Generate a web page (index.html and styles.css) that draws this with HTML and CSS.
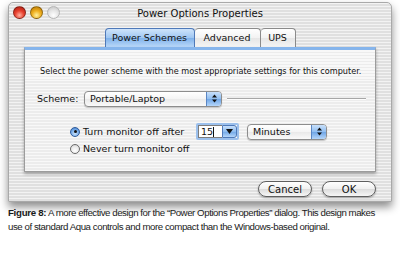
FILE: index.html
```html
<!DOCTYPE html>
<html lang="en">
<head>
    <meta charset="UTF-8">
    <title>Power Options Properties</title>
    <link rel="stylesheet" href="styles.css">
</head>
<body>
    <div class="window">
        <!-- Title bar -->
        <div class="titlebar">
            <div class="lights">
                <span class="light red"></span>
                <span class="light yellow"></span>
                <span class="light grey"></span>
            </div>
            <div class="title">Power Options Properties</div>
        </div>

        <div class="content">
            <div class="tabs">
                <div class="tab active">Power Schemes</div>
                <div class="tab">Advanced</div>
                <div class="tab">UPS</div>
            </div>

            <div class="pane">
                <p class="desc">Select the power scheme with the most appropriate settings for this computer.</p>

                <div class="scheme-row">
                    <span class="label">Scheme:</span>
                    <div class="popup scheme-popup">
                        <span class="popup-text">Portable/Laptop</span>
                        <span class="popup-arrows">
                            <svg width="7" height="9" viewBox="0 0 7 9"><path d="M3.5 0.5 L6 3.5 H1 Z M3.5 8.5 L6 5.5 H1 Z" fill="#111"/></svg>
                        </span>
                    </div>
                    <div class="separator"></div>
                </div>

                <div class="options">
                    <div class="option-row">
                        <span class="radio checked"></span>
                        <span class="option-label">Turn monitor off after</span>
                        <div class="combo">
                            <div class="field">15<span class="caret"></span></div>
                            <div class="combo-btn">
                                <svg width="7" height="5" viewBox="0 0 7 5"><path d="M0 0 H7 L3.5 5 Z" fill="#111"/></svg>
                            </div>
                        </div>
                        <div class="popup minutes-popup">
                            <span class="popup-text">Minutes</span>
                            <span class="popup-arrows">
                                <svg width="7" height="9" viewBox="0 0 7 9"><path d="M3.5 0.5 L6 3.5 H1 Z M3.5 8.5 L6 5.5 H1 Z" fill="#111"/></svg>
                            </span>
                        </div>
                    </div>
                    <div class="option-row">
                        <span class="radio"></span>
                        <span class="option-label">Never turn monitor off</span>
                    </div>
                </div>
            </div>

            <div class="buttons">
                <button class="btn">Cancel</button>
                <button class="btn">OK</button>
            </div>
        </div>
    </div>

    <p class="caption"><b>Figure 8:</b> A more effective design for the “Power Options Properties” dialog. This design makes<br>use of standard Aqua controls and more compact than the Windows-based original.</p>
</body>
</html>
```

FILE: styles.css
```css
* { box-sizing: border-box; }
body {
    margin: 0;
    background: #ffffff;
    font-family: 'DejaVu Sans', sans-serif;
    color: #111;
}
.window {
    margin: 2px 8px 0;
    width: 384px;
    height: 200px;
    border: 1px solid #a9a9a9;
    border-radius: 5px 5px 0 0;
    background: repeating-linear-gradient(180deg, #f3f3f3 0, #f3f3f3 1.5px, #e0e0e0 1.5px, #e0e0e0 3px);
    box-shadow: 0 5px 8px rgba(0,0,0,0.45);
    display: flex;
    flex-direction: column;
}
.titlebar {
    height: 20px;
    position: relative;
    display: flex;
    align-items: center;
    justify-content: center;
}
.lights {
    position: absolute;
    left: 4px;
    top: 3px;
    display: flex;
    gap: 4px;
}
.light {
    width: 13px;
    height: 13px;
    border-radius: 50%;
    border: 1px solid rgba(0,0,0,0.35);
}
.red { background: radial-gradient(circle at 50% 75%, #ffb0a0 0, #e8402e 45%, #a51a10 100%); }
.yellow { background: radial-gradient(circle at 50% 75%, #fff2a0 0, #f0b020 45%, #b07000 100%); }
.grey { background: radial-gradient(circle at 50% 75%, #ffffff 0, #e2e2e2 55%, #bdbdbd 100%); border-color: #b5b5b5; }
.title {
    font-size: 10px;
    color: #111;
}
.content {
    flex: 1;
    display: flex;
    flex-direction: column;
    padding: 5px 15px 0;
}
.tabs {
    display: flex;
    justify-content: center;
    height: 19px;
}
.tab {
    height: 19px;
    padding: 0;
    font-size: 9.5px;
    line-height: 18px;
    white-space: nowrap;
    text-align: center;
    border: 1px solid #8a8a8a;
    border-bottom: none;
    border-left: none;
    border-radius: 4px 4px 0 0;
    background: linear-gradient(180deg, #ffffff 0, #f2f2f2 50%, #e6e6e6 51%, #f4f4f4 100%);
}
.tab.active {
    width: 90px;
    border: 1px solid #4f79b8;
    border-bottom: none;
    background: linear-gradient(180deg, #cfe4fb 0, #9ec6f2 50%, #7fb1ea 51%, #b9d8f9 100%);
}
.tab:nth-child(2) { width: 66px; }
.tab:nth-child(3) { width: 35px; }
.pane {
    height: 125px;
    border: 1px solid #9c9c9c;
    border-top: 3px solid #86b5ec;
    background: repeating-linear-gradient(180deg, #f8f8f8 0, #f8f8f8 1.5px, #ececec 1.5px, #ececec 3px);
    box-shadow: 0 2px 3px rgba(0,0,0,0.3);
    padding: 0 9px 0 12px;
}
.desc {
    margin: 16px 0 0 3px;
    font-size: 8.15px;
    white-space: nowrap;
}
.scheme-row {
    display: flex;
    align-items: center;
    margin-top: 14px;
    height: 17px;
}
.label {
    font-size: 9.5px;
    width: 47px;
}
.popup {
    height: 16px;
    display: flex;
    border: 1px solid #8d8d8d;
    border-radius: 4px;
    background: linear-gradient(180deg, #ffffff 0, #f4f4f4 50%, #e9e9e9 51%, #fafafa 100%);
    overflow: hidden;
    box-shadow: 0 1px 1px rgba(0,0,0,0.2);
}
.popup-text {
    flex: 1;
    font-size: 9.5px;
    line-height: 14px;
    padding-left: 5px;
}
.popup-arrows {
    width: 15px;
    display: flex;
    align-items: center;
    justify-content: center;
    border-left: 1px solid #5a86c4;
    background: linear-gradient(180deg, #c8e0fb 0, #8fbdf0 50%, #6ea5e6 51%, #b5d6fa 100%);
}
.scheme-popup { width: 138px; }
.separator {
    flex: 1;
    height: 2px;
    margin-left: 5px;
    border-top: 1px solid #a7a7a7;
    border-bottom: 1px solid #fdfdfd;
}
.options {
    margin: 16px 0 0 33px;
    display: flex;
    flex-direction: column;
}
.option-row {
    display: flex;
    align-items: center;
    height: 17px;
}
.radio {
    width: 10px;
    height: 10px;
    border-radius: 50%;
    border: 1px solid #6b6b6b;
    background: radial-gradient(circle at 50% 70%, #ffffff 0, #e8e8e8 60%, #c4c4c4 100%);
    margin-right: 3px;
    position: relative;
}
.radio.checked {
    border-color: #2f5c9c;
    background: radial-gradient(circle at 50% 70%, #c8e2fc 0, #6fa6e6 60%, #3d73c0 100%);
}
.radio.checked::after {
    content: "";
    position: absolute;
    left: 2.5px;
    top: 2.5px;
    width: 3px;
    height: 3px;
    border-radius: 50%;
    background: #111;
}
.option-label {
    font-size: 9.5px;
    width: 113px;
    white-space: nowrap;
}
.combo {
    display: flex;
    height: 17px;
    border: 2px solid #9cc0ec;
    border-radius: 2px;
}
.field {
    width: 24px;
    background: #fff;
    font-size: 9.5px;
    line-height: 13px;
    padding-left: 2px;
    border: 1px solid #7d7d7d;
    border-right: none;
    display: flex;
    align-items: center;
}
.caret {
    width: 1px;
    height: 10px;
    background: #111;
}
.combo-btn {
    width: 15px;
    display: flex;
    align-items: center;
    justify-content: center;
    border: 1px solid #4f79b8;
    border-radius: 0 3px 3px 0;
    background: linear-gradient(180deg, #c8e0fb 0, #8fbdf0 50%, #6ea5e6 51%, #b5d6fa 100%);
}
.minutes-popup {
    width: 80px;
    margin-left: 8px;
}
.buttons {
    display: flex;
    justify-content: flex-end;
    gap: 10px;
    margin-top: 9px;
}
.btn {
    width: 54px;
    height: 16px;
    padding: 0;
    font-family: 'DejaVu Sans', sans-serif;
    font-size: 10px;
    color: #111;
    border: 1px solid #5f5f5f;
    border-radius: 8px;
    background: linear-gradient(180deg, #ffffff 0, #f0f0f0 50%, #dcdcdc 51%, #f6f6f6 100%);
    box-shadow: 0 1px 2px rgba(0,0,0,0.3);
}
.caption {
    margin: 4px 0 0 8px;
    font-family: 'Liberation Sans', sans-serif;
    font-size: 9.7px;
    line-height: 14px;
    letter-spacing: -0.45px;
    color: #1a1a1a;
    white-space: nowrap;
}
.caption b { letter-spacing: -0.3px; }
```
